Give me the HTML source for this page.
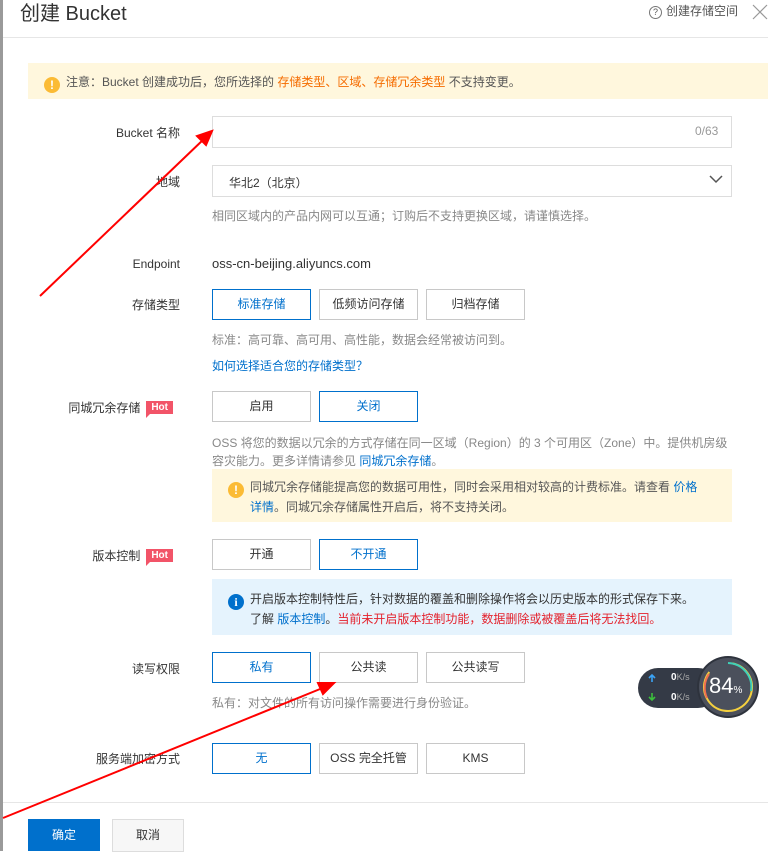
<!DOCTYPE html><html><head><meta charset="utf-8"><style>
body{margin:0;width:768px;height:851px;overflow:hidden;background:#fff;font-family:"Liberation Sans","Noto Sans CJK SC",sans-serif;font-size:12px;color:#333;position:relative}
.a{position:absolute;white-space:nowrap}
.lbl{position:absolute;right:588px;white-space:nowrap;color:#333}
.btn{position:absolute;height:29px;width:97px;border:1px solid #c8c8c8;text-align:center;line-height:29px;color:#333;background:#fff}
.on{border-color:#0070cc;color:#0070cc}
.d{color:#888}
.b{color:#0070cc}
.hot{display:inline-block;background:#f25468;color:#fff;font-size:10px;font-weight:bold;padding:0 5px;height:13px;line-height:13px;margin-left:6px;vertical-align:2px;position:relative}
.hot:after{content:"";position:absolute;left:0;bottom:-4px;border-left:4px solid #f25468;border-bottom:4px solid transparent}
.warn{display:inline-block;width:16px;height:16px;border-radius:50%;background:#fbbb35;color:#fff;text-align:center;line-height:16px;font-size:12px;font-weight:bold;margin-right:6px;vertical-align:-3px}
</style></head><body>
<div class="a" style="left:0;top:0;width:3px;height:851px;background:#9a9a9a"></div>
<div class="a" style="left:20px;top:-3px;font-size:20px;color:#333">创建 Bucket</div>
<div class="a" style="left:649px;top:2px;color:#555"><span style="display:inline-block;width:11px;height:11px;border:1px solid #777;border-radius:50%;font-size:9px;line-height:11px;text-align:center;margin-right:4px">?</span>创建存储空间</div>
<svg class="a" style="left:752px;top:4px" width="16" height="16"><path d="M1 1l14 14M15 1L1 15" stroke="#999" stroke-width="1.2"/></svg>
<div class="a" style="left:3px;top:37px;width:765px;height:1px;background:#e6e6e6"></div>
<div class="a" style="left:28px;top:63px;width:740px;height:36px;background:#fff7dd"></div>
<div class="a" style="left:44px;top:73px"><span class="warn">!</span><span style="color:#555">注意：Bucket 创建成功后，您所选择的 <span style="color:#f56c00">存储类型、区域、存储冗余类型</span> 不支持变更。</span></div>

<div class="lbl" style="top:124px">Bucket 名称</div>
<div class="a" style="left:212px;top:116px;width:518px;height:30px;border:1px solid #ddd"></div>
<div class="a" style="left:695px;top:124px;color:#999">0/63</div>

<div class="lbl" style="top:173px">地域</div>
<div class="a" style="left:212px;top:165px;width:518px;height:30px;border:1px solid #ddd"></div>
<div class="a" style="left:229px;top:174px">华北2（北京）</div>
<svg class="a" style="left:709px;top:175px" width="14" height="9"><path d="M1 1l6 6 6-6" fill="none" stroke="#555" stroke-width="1.5"/></svg>
<div class="a d" style="left:212px;top:207px">相同区域内的产品内网可以互通；订购后不支持更换区域，请谨慎选择。</div>

<div class="lbl" style="top:257px">Endpoint</div>
<div class="a" style="left:212px;top:256px;font-size:13px">oss-cn-beijing.aliyuncs.com</div>

<div class="lbl" style="top:296px">存储类型</div>
<div class="btn on" style="left:212px;top:289px">标准存储</div>
<div class="btn" style="left:319px;top:289px">低频访问存储</div>
<div class="btn" style="left:426px;top:289px">归档存储</div>
<div class="a d" style="left:212px;top:331px">标准：高可靠、高可用、高性能，数据会经常被访问到。</div>
<div class="a b" style="left:212px;top:357px">如何选择适合您的存储类型？</div>

<div class="lbl" style="top:399px;right:595px">同城冗余存储<span class="hot">Hot</span></div>
<div class="btn" style="left:212px;top:391px">启用</div>
<div class="btn on" style="left:319px;top:391px">关闭</div>
<div class="a d" style="left:212px;top:434px">OSS 将您的数据以冗余的方式存储在同一区域（Region）的 3 个可用区（Zone）中。提供机房级</div>
<div class="a d" style="left:212px;top:452px">容灾能力。更多详情请参见 <span class="b">同城冗余存储</span>。</div>
<div class="a" style="left:212px;top:469px;width:520px;height:53px;background:#fff7dd"></div>
<div class="a" style="left:228px;top:478px"><span class="warn">!</span><span style="color:#555">同城冗余存储能提高您的数据可用性，同时会采用相对较高的计费标准。请查看 <span class="b">价格</span></span></div>
<div class="a" style="left:250px;top:498px;color:#555"><span class="b">详情</span>。同城冗余存储属性开启后，将不支持关闭。</div>

<div class="lbl" style="top:547px;right:595px">版本控制<span class="hot">Hot</span></div>
<div class="btn" style="left:212px;top:539px">开通</div>
<div class="btn on" style="left:319px;top:539px">不开通</div>
<div class="a" style="left:212px;top:579px;width:520px;height:56px;background:#e5f3fd"></div>
<div class="a" style="left:228px;top:590px"><span class="warn" style="background:#0070cc;font-family:'Liberation Serif',serif">i</span><span style="color:#333">开启版本控制特性后，针对数据的覆盖和删除操作将会以历史版本的形式保存下来。</span></div>
<div class="a" style="left:250px;top:610px">了解 <span class="b">版本控制</span>。<span style="color:#e4222d">当前未开启版本控制功能，数据删除或被覆盖后将无法找回。</span></div>

<div class="lbl" style="top:660px">读写权限</div>
<div class="btn on" style="left:212px;top:652px">私有</div>
<div class="btn" style="left:319px;top:652px">公共读</div>
<div class="btn" style="left:426px;top:652px">公共读写</div>
<div class="a d" style="left:212px;top:694px">私有：对文件的所有访问操作需要进行身份验证。</div>

<div class="lbl" style="top:750px">服务端加密方式</div>
<div class="btn on" style="left:212px;top:743px">无</div>
<div class="btn" style="left:319px;top:743px">OSS 完全托管</div>
<div class="btn" style="left:426px;top:743px">KMS</div>

<div class="a" style="left:3px;top:802px;width:765px;height:1px;background:#e6e6e6"></div>
<div class="a" style="left:28px;top:819px;width:72px;height:32px;background:#0070cc;color:#fff;text-align:center;line-height:32px">确定</div>
<div class="a" style="left:112px;top:819px;width:70px;height:31px;border:1px solid #ddd;background:#f7f7f7;text-align:center;line-height:31px">取消</div>

<div class="a" style="left:638px;top:668px;width:80px;height:40px;border-radius:20px;background:#343a46"></div>
<svg class="a" style="left:647px;top:673px" width="10" height="30"><path d="M5 2v7M2 5l3-3 3 3" stroke="#3ba3f5" stroke-width="1.6" fill="none"/><path d="M5 20v7M2 24l3 3 3-3" stroke="#3cbf3c" stroke-width="1.6" fill="none"/></svg>
<div class="a" style="left:671px;top:672px;color:#fff;font-size:10px"><b>0</b><span style="color:#aaa;font-size:9px">K/s</span></div>
<div class="a" style="left:671px;top:692px;color:#fff;font-size:10px"><b>0</b><span style="color:#aaa;font-size:9px">K/s</span></div>
<div class="a" style="left:699px;top:658px;width:58px;height:58px;border-radius:50%;background:#4b505c;box-shadow:0 0 0 2px #2e333d"></div>
<svg class="a" style="left:699px;top:658px" width="58" height="58"><circle cx="29" cy="29" r="24" fill="none" stroke="#f4d03f" stroke-width="2" stroke-dasharray="125 30" transform="rotate(-80 29 29)"/><path d="M29 5A24 24 0 0 1 52 33" fill="none" stroke="#3fd0b8" stroke-width="2"/><path d="M8 40A24 24 0 0 1 10 16" fill="none" stroke="#f07050" stroke-width="2"/></svg>
<div class="a" style="left:709px;top:673px;color:#fff;font-size:22px">84<span style="font-size:10px">%</span></div>

<svg class="a" style="left:0;top:0" width="768" height="851"><g stroke="#f00" stroke-width="2" fill="#f00"><line x1="40" y1="296" x2="205" y2="138"/><polygon points="212,131 197,136 206,145"/><line x1="3" y1="818" x2="325" y2="687"/><polygon points="334,683 318,683 323,694"/></g></svg>
</body></html>
